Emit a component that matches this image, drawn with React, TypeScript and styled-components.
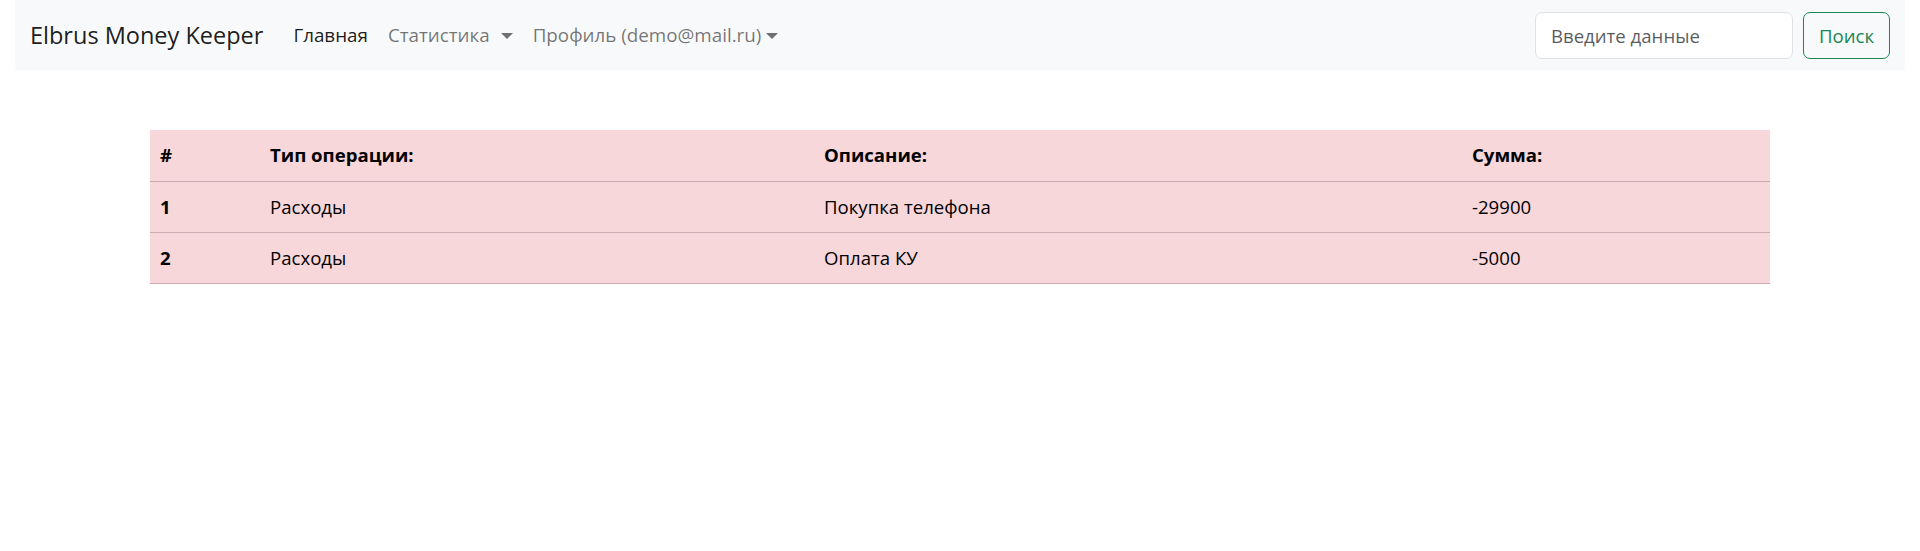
import React from "react";
import styled, { createGlobalStyle } from "styled-components";

const GlobalStyle = createGlobalStyle`
  html, body { margin: 0; padding: 0; background: #fff; }
  body {
    font-family: "Open Sans", "Noto Sans", sans-serif;
    color: #212529;
    -webkit-font-smoothing: antialiased;
  }
  * { box-sizing: border-box; }
`;

const Page = styled.div`
  padding: 0 15px;
`;

const Navbar = styled.nav`
  height: 70px;
  background: #f8f9fa;
  display: flex;
  align-items: center;
  justify-content: space-between;
  padding: 0 15px;
`;

const Left = styled.div`
  display: flex;
  align-items: center;
`;

const Brand = styled.a`
  font-size: 23.5px;
  line-height: 37px;
  color: rgba(0, 0, 0, 0.9);
  text-decoration: none;
  margin-right: 20px;
  white-space: nowrap;
`;

const NavList = styled.ul`
  list-style: none;
  margin: 0;
  padding: 0;
  display: flex;
  align-items: center;
`;

const NavLink = styled.a<{ $active?: boolean }>`
  display: flex;
  align-items: center;
  padding: 10px 10px;
  font-size: 18.8px;
  line-height: 30px;
  color: ${(p) => (p.$active ? "rgba(0,0,0,0.9)" : "rgba(0,0,0,0.55)")};
  text-decoration: none;
  white-space: nowrap;
`;

const Caret = styled.span<{ $gap: number }>`
  display: inline-block;
  margin-left: ${(p) => p.$gap}px;
  width: 0;
  height: 0;
  border-top: 6px solid rgba(0, 0, 0, 0.55);
  border-left: 6px solid transparent;
  border-right: 6px solid transparent;
  transform: translateY(1px);
`;

const SearchForm = styled.form`
  display: flex;
  align-items: center;
  gap: 10px;
`;

const SearchInput = styled.input`
  width: 258px;
  height: 47px;
  padding: 0 15px;
  font-family: inherit;
  font-size: 18.6px;
  color: #212529;
  background: #fff;
  border: 1px solid #dee2e6;
  border-radius: 7px;
  outline: none;
  &::placeholder {
    color: rgba(33, 37, 41, 0.75);
  }
`;

const SearchButton = styled.button`
  height: 47px;
  padding: 0 15px;
  font-family: inherit;
  font-size: 18.6px;
  color: #198754;
  background: transparent;
  border: 1px solid #198754;
  border-radius: 7px;
  cursor: pointer;
`;

const Container = styled.main`
  max-width: 1650px;
  margin: 0 auto;
  padding: 0 15px;
`;

const Table = styled.table`
  margin-top: 60px;
  width: 100%;
  border-collapse: collapse;
  table-layout: fixed;
  background: #f8d7da;
  color: #000;
`;

const Cell = styled.td<{ $bold?: boolean }>`
  padding: 10px 10px;
  height: 51px;
  font-size: 18.6px;
  line-height: 30px;
  font-weight: ${(p) => (p.$bold ? 700 : 400)};
  text-align: left;
  border-bottom: 1px solid #c9adb0;
  white-space: nowrap;
`;

const cols = [110, 554, 648, 308];

const rows = [
  { id: 1, type: "Расходы", desc: "Покупка телефона", sum: "-29900" },
  { id: 2, type: "Расходы", desc: "Оплата КУ", sum: "-5000" },
];

export default function App() {
  return (
    <>
      <GlobalStyle />
      <Page>
        <Navbar>
          <Left>
            <Brand href="#">Elbrus Money Keeper</Brand>
            <NavList>
              <li>
                <NavLink $active href="#">Главная</NavLink>
              </li>
              <li>
                <NavLink href="#">
                  Статистика
                  <Caret $gap={11} />
                </NavLink>
              </li>
              <li>
                <NavLink href="#">
                  Профиль (demo@mail.ru)
                  <Caret $gap={5} />
                </NavLink>
              </li>
            </NavList>
          </Left>
          <SearchForm onSubmit={(e) => e.preventDefault()}>
            <SearchInput placeholder="Введите данные" />
            <SearchButton type="submit">Поиск</SearchButton>
          </SearchForm>
        </Navbar>
      </Page>
      <Container>
        <Table>
          <colgroup>
            {cols.map((w, i) => (
              <col key={i} style={{ width: w }} />
            ))}
          </colgroup>
          <thead>
            <tr>
              <Cell as="th" $bold>#</Cell>
              <Cell as="th" $bold>Тип операции:</Cell>
              <Cell as="th" $bold>Описание:</Cell>
              <Cell as="th" $bold>Сумма:</Cell>
            </tr>
          </thead>
          <tbody>
            {rows.map((r) => (
              <tr key={r.id}>
                <Cell as="th" $bold>{r.id}</Cell>
                <Cell>{r.type}</Cell>
                <Cell>{r.desc}</Cell>
                <Cell>{r.sum}</Cell>
              </tr>
            ))}
          </tbody>
        </Table>
      </Container>
    </>
  );
}
